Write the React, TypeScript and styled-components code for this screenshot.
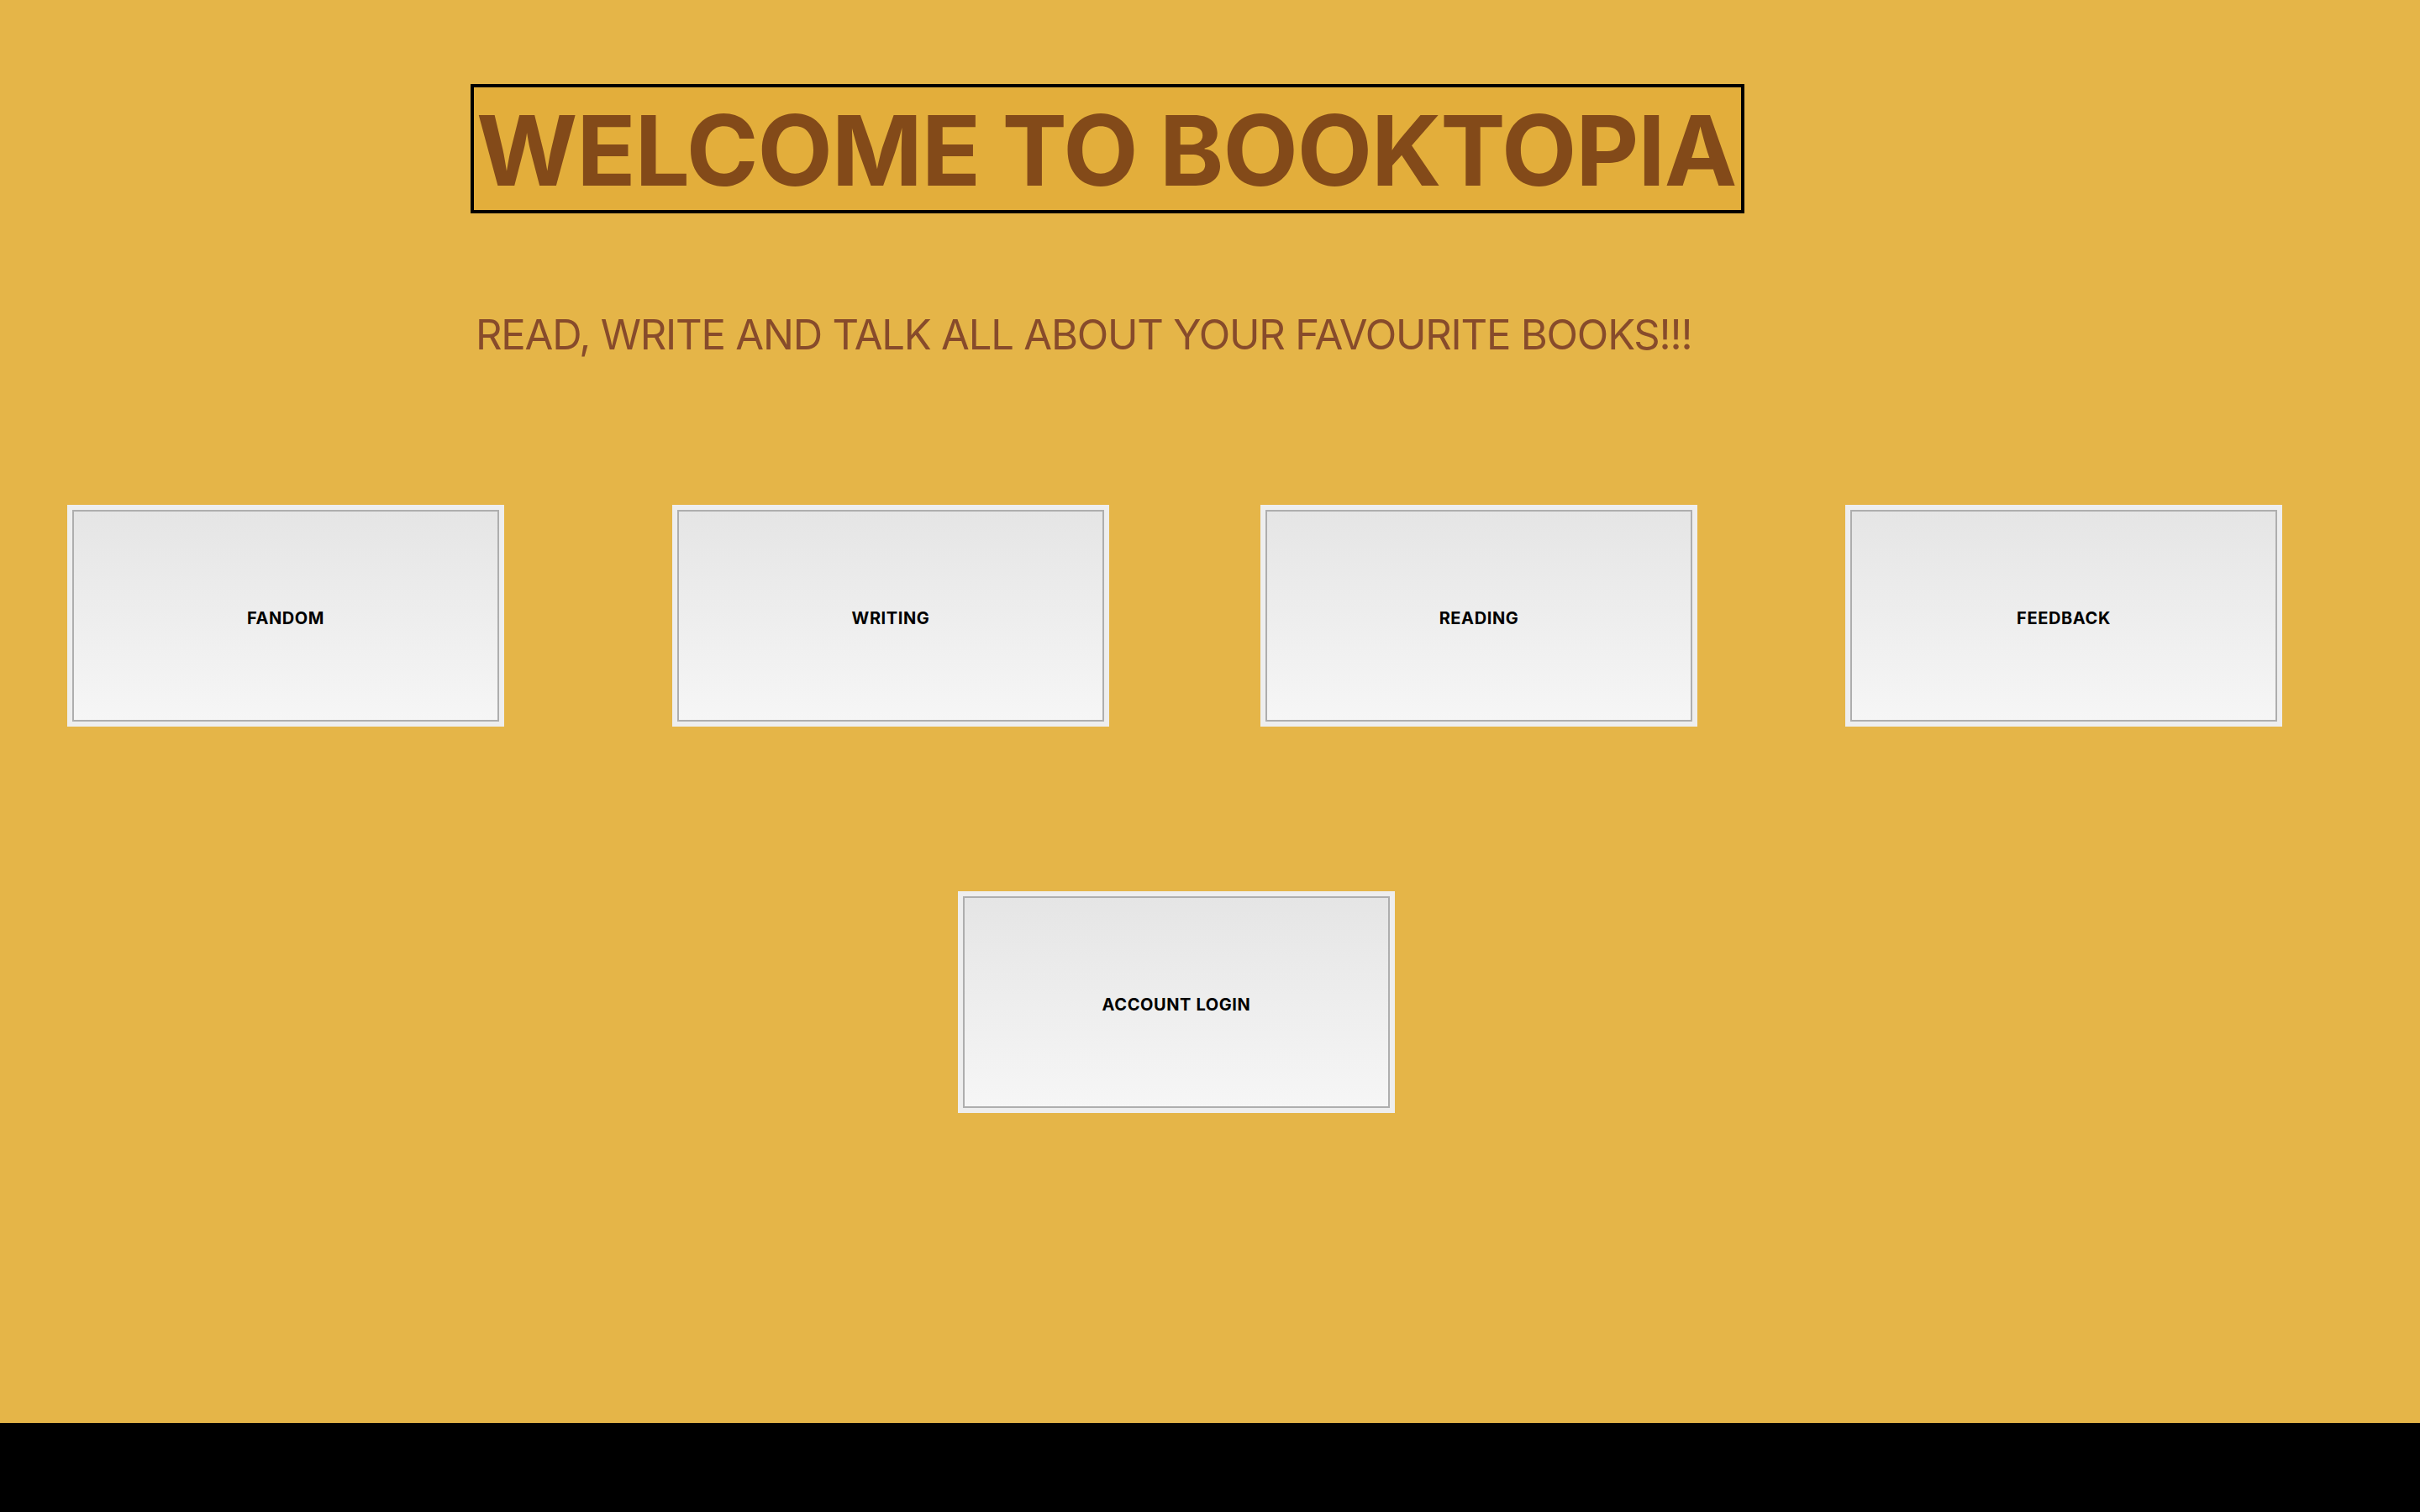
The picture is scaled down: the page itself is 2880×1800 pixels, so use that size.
import styled, { createGlobalStyle } from "styled-components";

const GlobalStyle = createGlobalStyle`
  html {
    background: #000;
  }
  body {
    margin: 0;
    font-family: Inter, "Noto Sans", sans-serif;
  }
`;

const Page = styled.div`
  background: #e5b548;
  min-height: 1694px;
  box-sizing: border-box;
  padding-top: 100px;
`;

const Header = styled.header`
  padding-left: 560px;
`;

const Title = styled.h1`
  display: inline-block;
  margin: 0;
  padding: 4px 6px 0 3px;
  border: 4px solid #000;
  background: #e3ae3b;
  color: #834a19;
  font-size: 116px;
  font-weight: 700;
  line-height: 142px;
  letter-spacing: -1.1px;
`;

const Tagline = styled.p`
  margin: 115px 0 0;
  padding-left: 6px;
  color: #874b2b;
  font-size: 49px;
  font-weight: 400;
  line-height: 60px;
  letter-spacing: -1.2px;
`;

const ButtonRow = styled.nav<{ $top: number; $left: number }>`
  display: flex;
  margin-top: ${(p) => p.$top}px;
  padding-left: ${(p) => p.$left}px;
`;

const NavButton = styled.button<{ $offset?: number }>`
  width: 520px;
  height: 264px;
  margin-left: ${(p) => p.$offset || 0}px;
  padding: 6px 0 0;
  box-sizing: border-box;
  border: 6px solid #eeeeee;
  box-shadow: inset 0 0 0 2px #aeaeae;
  background: linear-gradient(#e5e5e5, #f6f6f6);
  color: #000;
  font-family: Inter, "Noto Sans", sans-serif;
  font-size: 20px;
  font-weight: 700;
  letter-spacing: 0.6px;
  cursor: pointer;
`;

export default function App() {
  return (
    <Page>
      <GlobalStyle />
      <Header>
        <Title>WELCOME TO BOOKTOPIA</Title>
        <Tagline>READ, WRITE AND TALK ALL ABOUT YOUR FAVOURITE BOOKS!!!</Tagline>
      </Header>
      <ButtonRow $top={172} $left={80}>
        <NavButton>FANDOM</NavButton>
        <NavButton $offset={200}>WRITING</NavButton>
        <NavButton $offset={180}>READING</NavButton>
        <NavButton $offset={176}>FEEDBACK</NavButton>
      </ButtonRow>
      <ButtonRow $top={196} $left={1140}>
        <NavButton>ACCOUNT LOGIN</NavButton>
      </ButtonRow>
    </Page>
  );
}
